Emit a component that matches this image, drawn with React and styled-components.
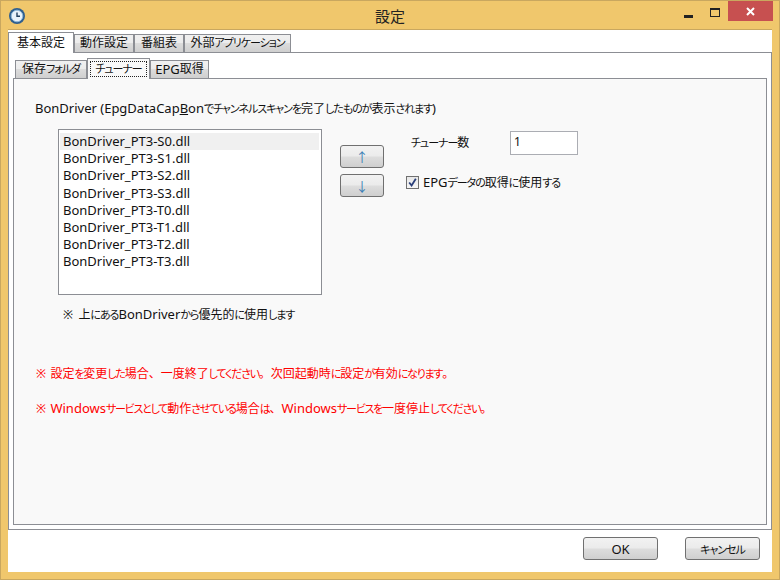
import React from "react"
import styled, { createGlobalStyle } from "styled-components"

const Global = createGlobalStyle`
    html, body {
        margin: 0;
        padding: 0;
        background: #f0c76c;
    }
    * {
        box-sizing: border-box;
    }
`;

const Window = styled.div`
    width: 780px;
    height: 580px;
    display: flex;
    flex-direction: column;
    background: #f0c76c;
    border: 1px solid #c9a75f;
    padding: 0 7px 7px 7px;
    font-family: "Noto Sans", "Noto Sans CJK JP", sans-serif;
    font-size: 12px;
    color: #111;
    overflow: hidden;
`;

const TitleBar = styled.div`
    height: 29px;
    flex-shrink: 0;
    display: flex;
    align-items: flex-start;
    justify-content: space-between;
    position: relative;
    margin-right: -1px;
`;

const TitleIcon = styled.svg`
    width: 18px;
    height: 18px;
    margin-top: 6px;
`;

const Title = styled.div`
    position: absolute;
    left: 0;
    right: 1px;
    top: 5px;
    text-align: center;
    font-size: 15px;
    line-height: 20px;
    color: #222;
`;

const Controls = styled.div`
    display: flex;
    align-items: flex-start;
`;

const ControlBtn = styled.div`
    width: ${p => p.$w}px;
    height: 20px;
    display: flex;
    align-items: center;
    justify-content: center;
    background: ${p => p.$close ? "#c75050" : "transparent"};
`;

const Client = styled.div`
    flex: 1;
    display: flex;
    flex-direction: column;
    background: #fff;
    box-shadow: 0 -1px 0 #c9a75f;
    min-height: 0;
`;

const TabRow = styled.div`
    display: flex;
    align-items: flex-end;
    flex-shrink: 0;
    height: ${p => p.$h}px;
    padding-left: ${p => p.$left}px;
    position: relative;
    z-index: 1;
    margin-bottom: -1px;
`;

const Tab = styled.div`
    width: ${p => p.$w}px;
    height: ${p => p.$active ? 21 : 19}px;
    border: 1px solid #8c8e94;
    border-bottom: ${p => p.$active ? "none" : "1px solid #8c8e94"};
    background: ${p => p.$active
        ? p.$panel
        : "linear-gradient(#f0f0f0 0%, #ececec 45%, #dcdcdc 50%, #cfcfcf 100%)"};
    display: flex;
    align-items: center;
    justify-content: center;
    line-height: 16px;
    white-space: nowrap;
    padding-bottom: 1px;
`;

const FocusBox = styled.span`
    width: 57px;
    height: 16px;
    border: 1px dotted #222;
    line-height: 14px;
    display: block;
    text-align: center;
`;

const OuterPanel = styled.div`
    flex: 1;
    min-height: 0;
    border: 1px solid #8c8e94;
    background: #fff;
    padding: 4px;
    display: flex;
    flex-direction: column;
`;

const InnerPanel = styled.div`
    flex: 1;
    min-height: 0;
    border: 1px solid #8c8e94;
    background: #f9f9f9;
    padding: 20px 0 0 21px;
`;

const Heading = styled.div`
    line-height: 18px;
    height: 18px;
`;

const Latin = styled.span`
    font-size: 13px;
`;

// Meiryo UI squeezes its kana, so they get a smaller, tighter run of their own
const Kana = styled.span`
    font-size: 11px;
    letter-spacing: -1.05px;
    font-feature-settings: "palt";
`;

const Underline = styled.span`
    text-decoration: underline;
`;

const Settings = styled.div`
    display: flex;
    margin-top: 12px;
    margin-left: 23px;
`;

const ListCol = styled.div`
    width: 264px;
`;

const DriverList = styled.ul`
    list-style: none;
    margin: 0;
    height: 166px;
    padding: 3px 2px 0 1px;
    border: 1px solid #8c8e94;
    background: #fff;
    font-size: 13px;
`;

const DriverItem = styled.li`
    height: 17.2px;
    line-height: 17px;
    padding-left: 3px;
    background: ${p => p.$selected ? "#f0f0f0" : "transparent"};
`;

const Note = styled.div`
    margin-top: 10px;
    margin-left: 5px;
    line-height: 18px;
    word-spacing: 2px;
`;

const MoveCol = styled.div`
    width: 44px;
    margin-left: 18px;
    padding-top: 16px;
    display: flex;
    flex-direction: column;
    gap: 6px;
`;

const PushButton = styled.div`
    width: ${p => p.$w}px;
    height: ${p => p.$h}px;
    border: 1px solid #707070;
    border-radius: 3px;
    background: linear-gradient(#f2f2f2 0%, #ebebeb 48%, #dddddd 52%, #cfcfcf 100%);
    display: flex;
    align-items: center;
    justify-content: center;
    color: ${p => p.$color || "#111"};
    font-size: ${p => p.$size || 12}px;
`;

const OptionCol = styled.div`
    margin-left: 22px;
    display: flex;
    flex-direction: column;
`;

const CountRow = styled.div`
    display: flex;
    align-items: flex-start;
    padding-left: 5px;
    margin-top: 2px;
`;

const CountLabel = styled.div`
    width: 99px;
    line-height: 18px;
    margin-top: 3px;
`;

const CountInput = styled.div`
    width: 68px;
    height: 24px;
    border: 1px solid #abadb3;
    background: #fff;
    padding: 1px 3px;
    line-height: 17px;
`;

const CheckRow = styled.div`
    display: flex;
    align-items: center;
    gap: 4px;
    margin-top: 18px;
    line-height: 18px;
`;

const CheckBox = styled.div`
    width: 13px;
    height: 13px;
    border: 1px solid #707070;
    background: linear-gradient(#e8e8e8, #f6f6f6);
    display: flex;
    align-items: center;
    justify-content: center;
`;

const Warnings = styled.div`
    margin-top: 40px;
    margin-left: 1px;
    display: flex;
    flex-direction: column;
    gap: 16px;
    color: #f00;
    line-height: 18px;
    word-spacing: 1px;

    ${Kana} {
        letter-spacing: -1.25px;
    }
`;

const Footer = styled.div`
    height: 42px;
    flex-shrink: 0;
    display: flex;
    justify-content: flex-end;
    gap: 27px;
    padding: 7px 12px 0 0;
`;

// splits a string into kana, latin and kanji runs
const Jp = ({ text }) => (
    <>
        {text.split(/([\u3041-\u30ff]+|[A-Za-z0-9_.()\- ]+)/).filter(Boolean).map((run, i) => {
            if (/^[\u3041-\u30ff]/.test(run)) return <Kana key={i}>{run}</Kana>;
            if (/^[A-Za-z0-9_.()\- ]/.test(run)) return <Latin key={i}>{run}</Latin>;
            return run;
        })}
    </>
);

const drivers = ["S0", "S1", "S2", "S3", "T0", "T1", "T2", "T3"];

const outerTabs = [
    { label: "基本設定", w: 66, active: true },
    { label: "動作設定", w: 60 },
    { label: "番組表", w: 50 },
    { label: "外部アプリケーション", w: 107 },
];

const App = () => (
    <>
        <Global />
        <Window>
            <TitleBar>
                <TitleIcon viewBox="0 0 18 18">
                    <circle cx="9" cy="9" r="8" fill="#2f5f8f" />
                    <circle cx="9" cy="9" r="5.8" fill="#e8f2fa" stroke="#8fb8d8" />
                    <path d="M9 5.5V9.3H12" fill="none" stroke="#23415f" strokeWidth="1.4" />
                </TitleIcon>
                <Title>設定</Title>
                <Controls>
                    <ControlBtn $w={26}>
                        <svg width="9" height="3" style={{ marginTop: 10 }}><rect width="9" height="3" fill="#222" /></svg>
                    </ControlBtn>
                    <ControlBtn $w={27}>
                        <svg width="10" height="9" viewBox="0 0 10 9" style={{ marginTop: 2 }}>
                            <rect x="0.5" y="0.5" width="9" height="8" fill="none" stroke="#222" />
                            <rect width="10" height="2" fill="#222" />
                        </svg>
                    </ControlBtn>
                    <ControlBtn $w={45} $close>
                        <svg width="9" height="9" viewBox="0 0 9 9">
                            <path d="M1 1L8 8M8 1L1 8" stroke="#fff" strokeWidth="2" />
                        </svg>
                    </ControlBtn>
                </Controls>
            </TitleBar>
            <Client>
                <TabRow $h={23} $left={0}>
                    {outerTabs.map(t => (
                        <Tab key={t.label} $w={t.w} $active={t.active} $panel="#fff"><Jp text={t.label} /></Tab>
                    ))}
                </TabRow>
                <OuterPanel>
                    <TabRow $h={22} $left={2}>
                        <Tab $w={72} $panel="#f9f9f9"><Jp text="保存フォルダ" /></Tab>
                        <Tab $w={63} $active $panel="#f9f9f9"><FocusBox><Jp text="チューナー" /></FocusBox></Tab>
                        <Tab $w={59} $panel="#f9f9f9"><Jp text="EPG取得" /></Tab>
                    </TabRow>
                    <InnerPanel>
                        <Heading>
                            <Latin>BonDriver (EpgDataCap<Underline>B</Underline>on</Latin>
                            <Jp text="でチャンネルスキャンを完了したものが表示されます)" />
                        </Heading>
                        <Settings>
                            <ListCol>
                                <DriverList>
                                    {drivers.map((d, i) => (
                                        <DriverItem key={d} $selected={i === 0}>BonDriver_PT3-{d}.dll</DriverItem>
                                    ))}
                                </DriverList>
                                <Note><Jp text="※ 上にあるBonDriverから優先的に使用します" /></Note>
                            </ListCol>
                            <MoveCol>
                                <PushButton $w={44} $h={23} $color="#3a7db5" $size={13}>↑</PushButton>
                                <PushButton $w={44} $h={23} $color="#3a7db5" $size={13}>↓</PushButton>
                            </MoveCol>
                            <OptionCol>
                                <CountRow>
                                    <CountLabel><Jp text="チューナー数" /></CountLabel>
                                    <CountInput>1</CountInput>
                                </CountRow>
                                <CheckRow>
                                    <CheckBox>
                                        <svg width="9" height="9" viewBox="0 0 9 9">
                                            <path d="M1.2 4.5L3.6 7.5L7.8 0.8" fill="none" stroke="#2a3f7a" strokeWidth="1.8" />
                                        </svg>
                                    </CheckBox>
                                    <span><Jp text="EPGデータの取得に使用する" /></span>
                                </CheckRow>
                            </OptionCol>
                        </Settings>
                        <Warnings>
                            <div><Jp text="※ 設定を変更した場合、一度終了してください。次回起動時に設定が有効になります。" /></div>
                            <div><Jp text="※ Windowsサービスとして動作させている場合は、Windowsサービスを一度停止してください。" /></div>
                        </Warnings>
                    </InnerPanel>
                </OuterPanel>
                <Footer>
                    <PushButton $w={75} $h={23}><Latin>OK</Latin></PushButton>
                    <PushButton $w={75} $h={23}><Jp text="キャンセル" /></PushButton>
                </Footer>
            </Client>
        </Window>
    </>
);

export default App;
